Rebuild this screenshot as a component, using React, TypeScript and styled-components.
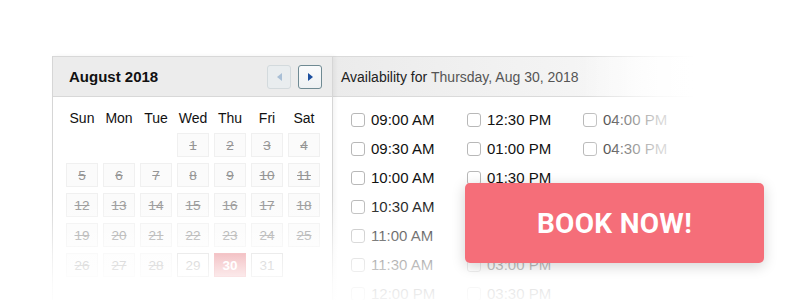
import React from 'react';
import styled, { createGlobalStyle } from 'styled-components';

const GlobalStyle = createGlobalStyle`
  html, body {
    margin: 0;
    padding: 0;
    background: #ffffff;
    overflow: hidden;
  }
  body {
    font-family: "Liberation Sans", Arial, sans-serif;
  }
`;

const Page = styled.div`
  width: 800px;
  height: 300px;
  padding: 56px 0 0 52px;
  box-sizing: border-box;
  position: relative;
  overflow: hidden;
`;

const Widget = styled.div`
  position: relative;
  display: flex;
  width: 680px;
  height: 280px;
`;

const CalendarPanel = styled.div`
  width: 281px;
  box-sizing: border-box;
  border-left: 1px solid #d6d6d6;
  border-right: 1px solid #d6d6d6;
  box-shadow: 2px 0 4px rgba(0, 0, 0, 0.05);
  position: relative;
  z-index: 1;
  background: #fff;
`;

const CalHeader = styled.div`
  height: 41px;
  box-sizing: border-box;
  background: #ececec;
  border-top: 1px solid #d8d8d8;
  border-bottom: 1px solid #d8d8d8;
  display: flex;
  align-items: center;
  justify-content: space-between;
  padding: 0 10px 0 16px;
`;

const MonthTitle = styled.div`
  font-size: 15px;
  font-weight: bold;
  color: #111;
`;

const NavGroup = styled.div`
  display: flex;
  gap: 7px;
`;

const NavButton = styled.div<{ $disabled?: boolean }>`
  width: 24px;
  height: 24px;
  box-sizing: border-box;
  border-radius: 3px;
  border: 1px solid ${p => (p.$disabled ? '#d3dadd' : '#6f8a93')};
  background: ${p => (p.$disabled ? '#e9edef' : 'linear-gradient(#fafbfc, #eef1f3)')};
  display: flex;
  align-items: center;
  justify-content: center;
`;

const Arrow = styled.div<{ $dir: 'left' | 'right'; $disabled?: boolean }>`
  width: 0;
  height: 0;
  border-top: 4px solid transparent;
  border-bottom: 4px solid transparent;
  ${p =>
    p.$dir === 'left'
      ? `border-right: 5px solid ${p.$disabled ? '#a9bfd6' : '#1c4f9f'};`
      : `border-left: 5px solid ${p.$disabled ? '#a9bfd6' : '#1c4f9f'};`}
`;

const Weekdays = styled.div`
  display: grid;
  grid-template-columns: repeat(7, 32px);
  column-gap: 5px;
  padding: 12px 0 0 13px;
`;

const Weekday = styled.div`
  font-size: 14px;
  line-height: 18px;
  text-align: center;
  color: #111;
`;

const DaysGrid = styled.div`
  display: grid;
  grid-template-columns: repeat(7, 32px);
  grid-auto-rows: 24px;
  column-gap: 5px;
  row-gap: 6px;
  padding: 6px 0 0 13px;
`;

type DayState = 'past' | 'empty' | 'open' | 'selected';

const DayCell = styled.div<{ $state: DayState }>`
  box-sizing: border-box;
  font-size: 13.5px;
  display: flex;
  align-items: center;
  justify-content: center;
  ${p =>
    p.$state === 'empty'
      ? 'visibility: hidden;'
      : p.$state === 'past'
      ? 'background: #fbfbfb; border: 1px solid #f0f0f0; color: #959595; text-decoration: line-through;'
      : p.$state === 'open'
      ? 'background: #fff; border: 1px solid #cfcfcf; color: #959595;'
      : 'background: linear-gradient(#e0646c, #ec8a90); border: 1px solid #e56c74; color: #fff; font-weight: bold;'}
`;

const AvailPanel = styled.div`
  flex: 1;
`;

const AvailHeader = styled.div`
  height: 41px;
  box-sizing: border-box;
  background: linear-gradient(to right, #ebebeb 0%, #f4f4f4 60%, #ffffff 100%);
  border-top: 1px solid #dadada;
  border-bottom: 1px solid #dadada;
  display: flex;
  align-items: center;
  padding-left: 8px;
  font-size: 14px;
  color: #555;
`;

const Strong = styled.span`
  color: #222;
`;

const SlotGrid = styled.div`
  display: grid;
  grid-template-columns: repeat(3, 116px);
  grid-template-rows: repeat(7, 29px);
  grid-auto-flow: column;
  padding: 8px 0 0 18px;
`;

const Slot = styled.label`
  display: flex;
  align-items: center;
  gap: 6px;
  font-size: 15px;
  color: #111;
`;

const Box = styled.span`
  width: 14px;
  height: 14px;
  box-sizing: border-box;
  border: 1px solid #b8b8b8;
  border-radius: 3px;
  background: #fff;
`;

const FadeRight = styled.div`
  position: absolute;
  top: -2px;
  right: 0;
  width: 150px;
  height: 282px;
  background: linear-gradient(
    to right,
    rgba(255, 255, 255, 0) 0%,
    rgba(255, 255, 255, 0.35) 20%,
    rgba(255, 255, 255, 0.8) 50%,
    #ffffff 75%
  );
  z-index: 2;
  pointer-events: none;
`;

const FadeBottom = styled.div`
  position: absolute;
  left: -4px;
  right: 0;
  top: 140px;
  height: 140px;
  background: linear-gradient(
    rgba(255, 255, 255, 0) 0%,
    rgba(255, 255, 255, 0.3) 22%,
    rgba(255, 255, 255, 0.62) 42%,
    rgba(255, 255, 255, 0.88) 63%,
    #ffffff 84%
  );
  z-index: 2;
  pointer-events: none;
`;

const BookButton = styled.button`
  position: absolute;
  left: 465px;
  top: 183px;
  width: 299px;
  height: 80px;
  border: none;
  border-radius: 5px;
  background: #f56e79;
  color: #fff;
  font-family: Roboto, "Liberation Sans", sans-serif;
  font-weight: bold;
  font-size: 28px;
  letter-spacing: 0.3px;
  box-shadow: 0 3px 14px rgba(0, 0, 0, 0.18);
  z-index: 3;
  cursor: pointer;
`;

const weekdays = ['Sun', 'Mon', 'Tue', 'Wed', 'Thu', 'Fri', 'Sat'];

const days: { label: string; state: DayState }[] = [
  { label: '', state: 'empty' },
  { label: '', state: 'empty' },
  { label: '', state: 'empty' },
  ...Array.from({ length: 28 }, (_, i) => ({ label: String(i + 1), state: 'past' as DayState })),
  { label: '29', state: 'open' },
  { label: '30', state: 'selected' },
  { label: '31', state: 'open' },
];

const slots = [
  '09:00 AM', '09:30 AM', '10:00 AM', '10:30 AM', '11:00 AM', '11:30 AM', '12:00 PM',
  '12:30 PM', '01:00 PM', '01:30 PM', '02:00 PM', '02:30 PM', '03:00 PM', '03:30 PM',
  '04:00 PM', '04:30 PM',
];

export default function App() {
  return (
    <Page>
      <GlobalStyle />
      <Widget>
        <CalendarPanel>
          <CalHeader>
            <MonthTitle>August 2018</MonthTitle>
            <NavGroup>
              <NavButton $disabled>
                <Arrow $dir="left" $disabled />
              </NavButton>
              <NavButton>
                <Arrow $dir="right" />
              </NavButton>
            </NavGroup>
          </CalHeader>
          <Weekdays>
            {weekdays.map(d => (
              <Weekday key={d}>{d}</Weekday>
            ))}
          </Weekdays>
          <DaysGrid>
            {days.map((d, i) => (
              <DayCell key={i} $state={d.state}>
                {d.label}
              </DayCell>
            ))}
          </DaysGrid>
        </CalendarPanel>
        <AvailPanel>
          <AvailHeader>
            <Strong>Availability for</Strong>&nbsp;Thursday, Aug 30, 2018
          </AvailHeader>
          <SlotGrid>
            {slots.map(s => (
              <Slot key={s}>
                <Box />
                {s}
              </Slot>
            ))}
          </SlotGrid>
        </AvailPanel>
        <FadeRight />
        <FadeBottom />
      </Widget>
      <BookButton>BOOK NOW!</BookButton>
    </Page>
  );
}
